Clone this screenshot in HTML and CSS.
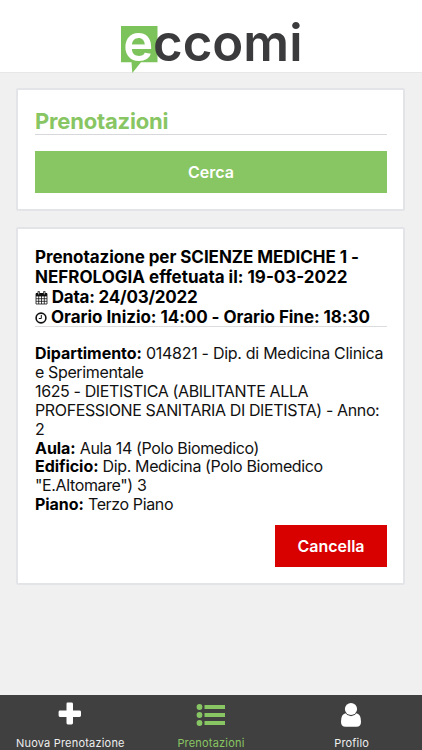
FILE: index.html
```
<!DOCTYPE html>
<html lang="it">
<head>
    <meta charset="UTF-8">
    <meta name="viewport" content="width=device-width, initial-scale=1.0">
    <title>eccomi - Prenotazioni</title>
    <link rel="stylesheet" href="styles.css">
</head>
<body>
    <header class="header">
        <svg class="logo" width="184" height="60" viewBox="0 0 184 60">
            <path d="M1 10H37.5V46.3H21L12.3 57L11.5 46.3H1Z" fill="#7dc35b"/>
            <text class="logo-e" x="3.3" y="44.6" textLength="30" lengthAdjust="spacingAndGlyphs">e</text>
            <text class="logo-text" x="33" y="44.6" textLength="149.5" lengthAdjust="spacingAndGlyphs">ccomi</text>
        </svg>
    </header>

    <main class="content">
        <section class="card">
            <h1 class="title">Prenotazioni</h1>
            <button class="btn btn-search">Cerca</button>
        </section>

        <section class="card">
            <h2 class="booking-title">
                <span class="line l1">Prenotazione per SCIENZE MEDICHE 1 -</span>
                <span class="line l2">NEFROLOGIA effetuata il: 19-03-2022</span>
                <span class="line l3">
                    <svg class="icon" width="13" height="14" viewBox="0 0 13 14">
                        <path d="M1 2.5H12V13H1ZM1 5H12M1 7.7H12M1 10.3H12M3.7 5V13M6.5 5V13M9.3 5V13" fill="none" stroke="#111" stroke-width=".8"/>
                        <path d="M1 2H12V5H1Z" fill="#111"/>
                        <path d="M3.7 .3V3.5M9.3 .3V3.5" stroke="#111" stroke-width="2.2"/>
                        <path d="M3.7 1V3.4M9.3 1V3.4" stroke="#fff" stroke-width=".7"/>
                    </svg>
                    Data: 24/03/2022
                </span>
                <span class="line l4">
                    <svg class="icon clock" width="12" height="12" viewBox="0 0 12 12">
                        <circle cx="6" cy="6" r="4.9" fill="none" stroke="#111" stroke-width="1.6"/>
                        <path d="M6.3 3V6.5H3.8" fill="none" stroke="#111"/>
                    </svg>
                    Orario Inizio: 14:00 - Orario Fine: 18:30
                </span>
            </h2>
            <p class="details">
                <span class="department"><b>Dipartimento:</b> 014821 - Dip. di Medicina Clinica</span><br>
                e Sperimentale<br>
                1625 - DIETISTICA (ABILITANTE ALLA<br>
                PROFESSIONE SANITARIA DI DIETISTA) - Anno:<br>
                2<br>
                <b>Aula:</b> Aula 14 (Polo Biomedico)<br>
                <b>Edificio:</b> Dip. Medicina (Polo Biomedico<br>
                "E.Altomare") 3<br>
                <b>Piano:</b> Terzo Piano
            </p>
            <button class="btn btn-cancel">Cancella</button>
        </section>
    </main>

    <nav class="tabbar">
        <a class="tab">
            <svg width="30" height="26" viewBox="0 0 30 26">
                <path d="M12.4 1.5H16.6Q18 1.5 18 2.9V9.5H24.5Q26 9.5 26 10.9V14.5Q26 15.9 24.5 15.9H18V22.1Q18 23.5 16.6 23.5H12.9Q11.5 23.5 11.5 22.1V15.9H5Q3.6 15.9 3.6 14.5V10.9Q3.6 9.5 5 9.5H11.5V2.9Q11.5 1.5 12.4 1.5Z" fill="#fff"/>
            </svg>
            <span>Nuova Prenotazione</span>
        </a>
        <a class="tab active">
            <svg width="30" height="26" viewBox="0 0 30 26">
                <g fill="#88c563">
                    <circle cx="3.5" cy="6" r="2.9"/><circle cx="3.5" cy="14" r="2.9"/><circle cx="3.5" cy="22" r="2.9"/>
                    <path d="M8.5 4H29V8H8.5ZM8.5 12H29V16H8.5ZM8.5 20H29V24H8.5Z"/>
                </g>
            </svg>
            <span>Prenotazioni</span>
        </a>
        <a class="tab">
            <svg width="30" height="26" viewBox="0 0 30 26">
                <path d="M8.5 12.3Q4 13.3 4 20.7Q4 25.8 8.5 25.8H19.5Q24 25.8 24 20.7Q24 13.3 19.5 12.3Q17.5 15.2 14 15.2Q10.5 15.2 8.5 12.3Z" fill="#fff"/>
                <circle cx="14" cy="8" r="6.1" fill="#fff"/>
            </svg>
            <span>Profilo</span>
        </a>
    </nav>
</body>
</html>
```
FILE: styles.css
```
* {
    box-sizing: border-box;
}

body {
    font-family: Inter, "Liberation Sans", sans-serif;
    margin: 0;
    height: 100vh;
    display: flex;
    flex-direction: column;
    background-color: #f0f0f0;
    color: #111;
    overflow: hidden;
}

.header {
    height: 73px;
    flex: none;
    padding-top: 16px;
    background-color: #fff;
    border-bottom: 1px solid #e7e7e7;
}

.logo {
    display: block;
    margin-left: 120px;
    overflow: visible;
}

.logo text {
    font-size: 51px;
    font-weight: 600;
}

.logo-e {
    fill: #fff;
}

.logo-text {
    fill: #3b3b3d;
}

.content {
    flex: 1;
    padding: 15px 17px 0 16px;
    display: flex;
    flex-direction: column;
    gap: 16px;
}

.card {
    background-color: #fff;
    border: 2px solid #e2e4e8;
    border-radius: 2px;
    padding: 17px 16px 16px 17px;
    display: flex;
    flex-direction: column;
}

.title {
    margin: 0 0 16px;
    height: 28px;
    line-height: 28px;
    font-size: 22px;
    font-weight: 700;
    letter-spacing: -0.2px;
    color: #88c563;
    border-bottom: 1px solid #d8d8dc;
}

.btn {
    border: none;
    padding: 0;
    height: 42px;
    font-family: inherit;
    font-size: 16px;
    font-weight: 600;
    color: #fff;
}

.btn-search {
    background-color: #88c563;
}

.btn-cancel {
    width: 112px;
    align-self: flex-end;
    background-color: #d90000;
}

.booking-title {
    margin: 0 0 17px;
    padding-top: 1px;
    height: 81px;
    font-size: 17px;
    font-weight: 700;
    line-height: 20px;
    letter-spacing: -0.05px;
    color: #000;
    border-bottom: 1px solid #dcdcdf;
}

.line {
    display: block;
    white-space: nowrap;
}

.l2 {
    letter-spacing: 0;
}

.l3 {
    letter-spacing: -0.22px;
}

.icon {
    vertical-align: -2px;
}

.clock {
    vertical-align: -1px;
}

.details {
    margin: 0 0 11px;
    font-size: 16px;
    line-height: 18.9px;
    letter-spacing: -0.37px;
    white-space: nowrap;
}

.details b {
    font-weight: 700;
    letter-spacing: -0.05px;
    color: #000;
}

.details .department {
    letter-spacing: -0.28px;
}

.tabbar {
    height: 55px;
    flex: none;
    display: grid;
    grid-template-columns: repeat(3, 1fr);
    background-color: #404040;
}

.tab {
    display: flex;
    flex-direction: column;
    align-items: center;
    padding-top: 6px;
    font-size: 11px;
    line-height: 14px;
    letter-spacing: 0.2px;
    color: #eee;
}

.tab span {
    margin-top: 9px;
    white-space: nowrap;
}

.active {
    color: #88c563;
}
```
